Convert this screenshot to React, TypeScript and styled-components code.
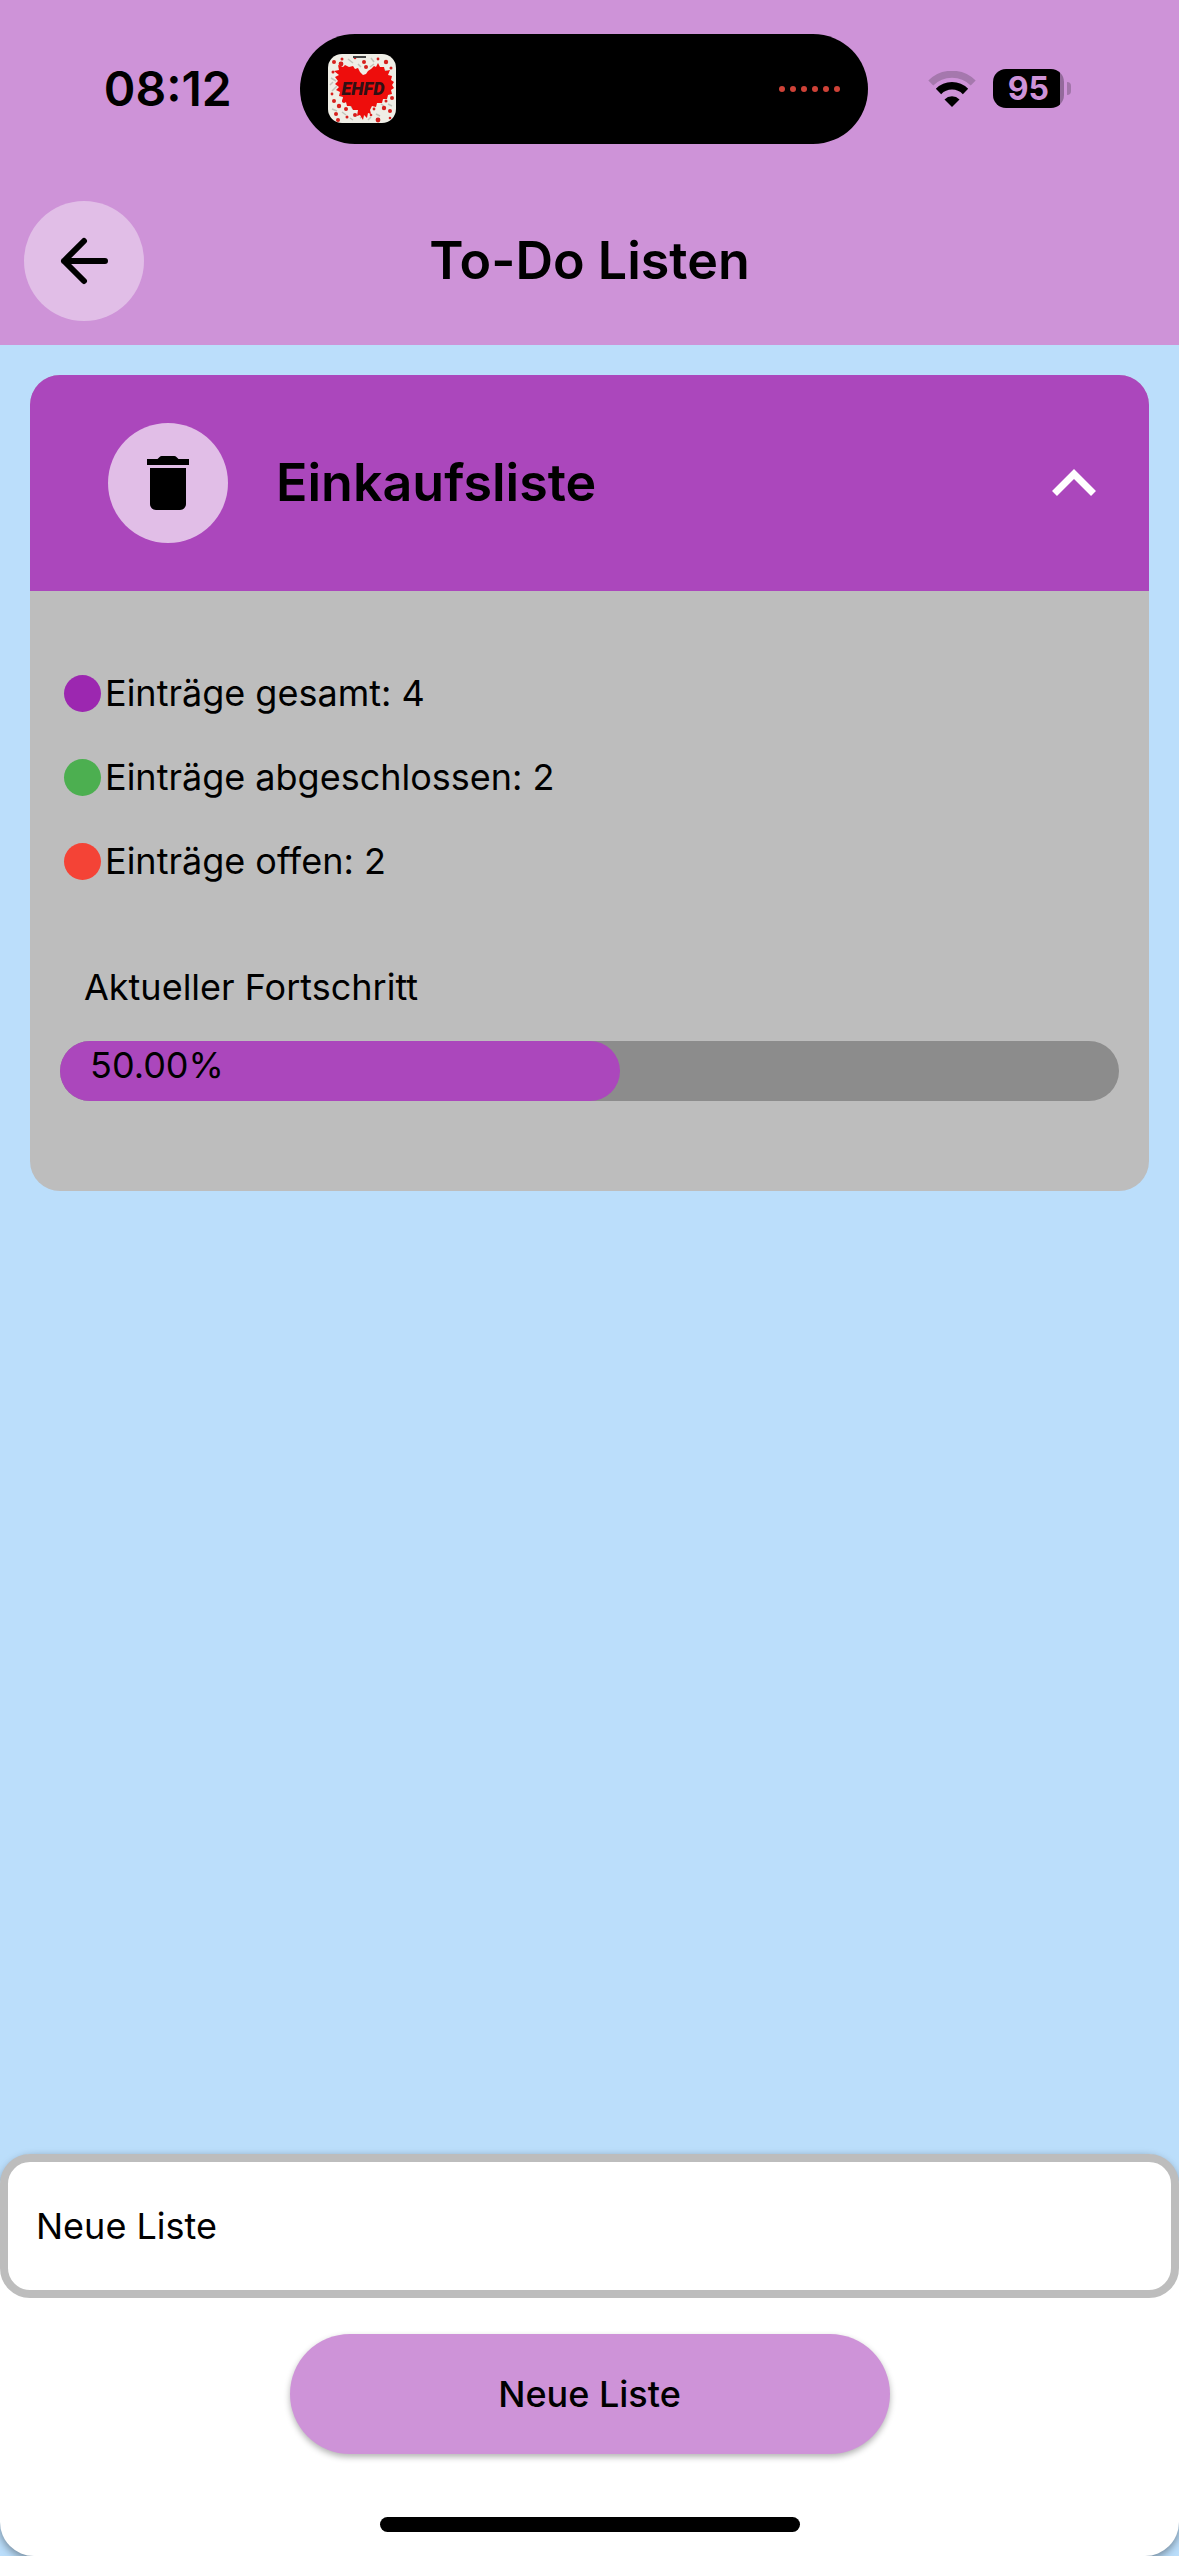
import React, { useState } from "react";
import styled, { createGlobalStyle } from "styled-components";

const colors = {
  bar: "#ce93d8",
  accent: "#ab47bc",
  soft: "#e1bee7",
  page: "#bbdefb",
  panel: "#bdbdbd",
  track: "#8c8c8c",
};

const GlobalStyle = createGlobalStyle`
  *, *::before, *::after { box-sizing: border-box; }
  body {
    margin: 0;
    background: ${colors.page};
    color: #000;
    font-family: Inter, "Liberation Sans", sans-serif;
    font-size: 36px;
    line-height: 42px;
  }
  button, input { font: inherit; color: inherit; }
`;

const Page = styled.div`
  display: flex;
  flex-direction: column;
  min-height: 100vh;
`;

const Header = styled.header`
  background: ${colors.bar};
  padding-bottom: 24px;
`;

const StatusBar = styled.div`
  display: grid;
  grid-template-columns: 1fr 568px 1fr;
  align-items: center;
  height: 177px;
  padding-right: 12px;
`;

const Clock = styled.time`
  padding-left: 36px;
  text-align: center;
  font-size: 48px;
  line-height: 60px;
  font-weight: 600;
`;

const Island = styled.div`
  display: flex;
  align-items: center;
  justify-content: space-between;
  height: 110px;
  padding: 0 28px;
  border-radius: 55px;
  background: #000;
`;

const Dots = styled.div`
  display: flex;
  gap: 5px;
`;

const RecordDot = styled.span`
  width: 6px;
  height: 6px;
  border-radius: 50%;
  background: #cf4238;
`;

const StatusIcons = styled.div`
  display: flex;
  align-items: center;
  justify-content: center;
  gap: 17px;
  padding-right: 36px;
`;

const Battery = styled.div`
  display: flex;
  align-items: center;
  gap: 3px;
`;

const BatteryBody = styled.span`
  width: 71px;
  height: 39px;
  border-radius: 13px;
  background: linear-gradient(90deg, #000 67px, #936a9b 67px);
  color: ${colors.bar};
  font-size: 32px;
  line-height: 40px;
  font-weight: 700;
  text-align: center;
`;

const BatteryTip = styled.span`
  width: 4px;
  height: 13px;
  border-radius: 0 4px 4px 0;
  background: #a275aa;
`;

const TitleBar = styled.div`
  display: grid;
  grid-template-columns: 120px 1fr 120px;
  align-items: center;
  padding: 24px 24px 0;
`;

const RoundButton = styled.button`
  display: flex;
  align-items: center;
  justify-content: center;
  width: 120px;
  height: 120px;
  padding: 0;
  border: 0;
  border-radius: 50%;
  background: ${colors.soft};
`;

const PageTitle = styled.h1`
  margin: 0;
  text-align: center;
  font-size: 52px;
  line-height: 60px;
  font-weight: 600;
`;

const Main = styled.main`
  flex: 1;
  padding: 30px;
`;

const Card = styled.article`
  overflow: hidden;
  border-radius: 30px;
  background: ${colors.panel};
`;

const CardHeader = styled.div`
  display: flex;
  align-items: center;
  padding: 48px 48px 48px 78px;
  background: ${colors.accent};
`;

const CardTitle = styled.h2`
  flex: 1;
  margin: 0 0 0 48px;
  font-size: 52px;
  line-height: 60px;
  font-weight: 600;
`;

const ToggleButton = styled.button`
  display: flex;
  padding: 0;
  border: 0;
  background: none;
`;

const CardBody = styled.div`
  padding: 60px 30px 90px;
`;

const Stats = styled.ul`
  margin: 0 0 63px;
  padding: 0 4px;
  list-style: none;
`;

const Stat = styled.li`
  display: flex;
  align-items: center;
  gap: 4px;
  height: 84px;
`;

const StatDot = styled.span<{ $color: string }>`
  width: 37px;
  height: 37px;
  border-radius: 50%;
  background: ${({ $color }) => $color};
`;

const ProgressLabel = styled.p`
  margin: 0 24px 33px;
`;

const Track = styled.div`
  height: 60px;
  border-radius: 30px;
  background: ${colors.track};
`;

const Fill = styled.div`
  height: 60px;
  padding: 3px 30px;
  border-radius: 30px;
  background: ${colors.accent};
`;

const Footer = styled.form`
  display: flex;
  flex-direction: column;
  align-items: center;
  padding-bottom: 24px;
  border-radius: 34px;
  background: #fff;
  box-shadow: 0 3px 9px rgba(0, 0, 0, 0.4);
`;

const NameInput = styled.input`
  width: 100%;
  height: 144px;
  padding: 0 28px;
  border: 8px solid ${colors.panel};
  border-radius: 30px;
  background: #fff;
  outline: none;

  &::placeholder {
    color: #000;
    opacity: 1;
  }
`;

const SubmitButton = styled.button`
  width: 600px;
  max-width: 90%;
  height: 120px;
  margin: 36px 0 63px;
  border: 0;
  border-radius: 60px;
  background: ${colors.bar};
  box-shadow: 0 3px 6px rgba(0, 0, 0, 0.3);
  font-weight: 500;
`;

const HomeIndicator = styled.div`
  width: 420px;
  height: 15px;
  border-radius: 8px;
  background: #000;
`;

const specks = [
  [6, 8, 2], [14, 5, 1.5], [13, 10, 2.4], [27, 4, 1.3], [36, 8, 2], [38, 13, 2], [50, 5, 1.4],
  [58, 8, 2.2], [63, 14, 1.5], [5, 18, 1.5], [4, 40, 1.4], [6, 47, 2], [11, 52, 2.2], [8, 60, 2],
  [18, 55, 2], [19, 63, 1.5], [27, 61, 2], [10, 66, 2], [46, 55, 1.4], [56, 54, 2.2], [62, 57, 2],
  [64, 44, 2], [58, 47, 1.5], [50, 66, 2.4], [43, 61, 1.3], [62, 64, 1.3], [16, 47, 2],
];

const AppLogo = () => (
  <svg width="68" height="69" viewBox="0 0 68 69" role="img" aria-label="EHFD">
    <rect width="68" height="69" rx="14" fill="#efeee6" />
    <path
      d="M3 24l5 3M9 32l-5 5M20 5l5 4M43 4l3 4M54 15l6 3M4 55l5 2M14 58l4 3M22 51l3 4M32 64l4-2M40 66l3-3M48 60l4 2M53 50l3 2M60 50l4 2M30 10l3 3M42 13l4-3M22 64l3 2M2 31l3-3"
      stroke="#c4c4bb"
      strokeWidth="1.5"
    />
    {specks.map(([x, y, r]) => (
      <circle key={`${x}-${y}`} cx={x} cy={y} r={r} fill="#d6201e" />
    ))}
    <path
      d="M6 17l5-1-1-5 5 2 2-2 4 2 4-1 2 3 3-1 2 4 3 3 3-1 2-3 3-2 3-3 2 1 2-4 2 4 4 0 1 4 5-1-2 5 4 1-1 4 3 2-2 3 2 3-3 2 1 4-4 1-1 4-4 0-1 4-5 0-1 4-4-1-2 4 1 4-3-1-1 5-3-3-1 5-3-5-3 1 1-6-5 0-2-4-4 0-1-4-4 0 1-5-4-1 1-4-4-2 3-3-4-3 3-3-3-4 4-2z"
      fill="#ee0d0c"
    />
    <path d="M25 3h13" stroke="#444" strokeWidth="2" />
    <text
      x="35"
      y="41"
      textAnchor="middle"
      fontFamily="Roboto, sans-serif"
      fontSize="18"
      fontWeight="900"
      fontStyle="italic"
      fill="#311014"
    >
      EHFD
    </text>
  </svg>
);

const WifiIcon = () => (
  <svg width="48" height="36" viewBox="0 0 48 36" fill="none" aria-hidden="true">
    <path d="M2.800 12A30 30 0 0 1 45.200 12" stroke="#a578ad" strokeWidth="7" />
    <path d="M10.500 20.500A19 19 0 0 1 37.500 20.500" stroke="#000" strokeWidth="7.500" />
    <path d="M24 36l-7.500-7.600a10.700 10.700 0 0 1 15 0z" fill="#000" />
  </svg>
);

const BackIcon = () => (
  <svg width="48" height="48" viewBox="0 0 48 48" fill="none" aria-hidden="true">
    <path
      d="M24 4L4 24l20 20M4 24h41"
      stroke="#000"
      strokeWidth="6"
      strokeLinecap="round"
      strokeLinejoin="round"
    />
  </svg>
);

const TrashIcon = () => (
  <svg width="72" height="72" viewBox="0 0 24 24" aria-hidden="true">
    <path d="M6 19c0 1.100.9 2 2 2h8c1.100 0 2-.9 2-2V7H6v12zM19 4h-3.500l-.7-.7a1 1 0 0 0-.7-.3H9.900a1 1 0 0 0-.7.300L8.500 4H5v2h14V4z" />
  </svg>
);

const ChevronIcon = ({ open }: { open: boolean }) => (
  <svg width="54" height="54" viewBox="0 0 54 54" fill="none" aria-hidden="true">
    <path
      d={open ? "M7.500 37.500L27 18l19.500 19.500" : "M7.500 18L27 37.500 46.500 18"}
      stroke="#fff"
      strokeWidth="7"
    />
  </svg>
);

const stats = [
  { label: "Einträge gesamt", count: 4, color: "#9c27b0" },
  { label: "Einträge abgeschlossen", count: 2, color: "#4caf50" },
  { label: "Einträge offen", count: 2, color: "#f44336" },
];

export default function App() {
  const [open, setOpen] = useState(true);
  const percent = (stats[1].count / stats[0].count) * 100;

  return (
    <Page>
      <GlobalStyle />
      <Header>
        <StatusBar>
          <Clock>08:12</Clock>
          <Island>
            <AppLogo />
            <Dots>
              {[0, 1, 2, 3, 4, 5].map((dot) => (
                <RecordDot key={dot} />
              ))}
            </Dots>
          </Island>
          <StatusIcons>
            <WifiIcon />
            <Battery>
              <BatteryBody>95</BatteryBody>
              <BatteryTip />
            </Battery>
          </StatusIcons>
        </StatusBar>
        <TitleBar>
          <RoundButton type="button" aria-label="Zurück">
            <BackIcon />
          </RoundButton>
          <PageTitle>To-Do Listen</PageTitle>
        </TitleBar>
      </Header>
      <Main>
        <Card>
          <CardHeader>
            <RoundButton type="button" aria-label="Liste löschen">
              <TrashIcon />
            </RoundButton>
            <CardTitle>Einkaufsliste</CardTitle>
            <ToggleButton
              type="button"
              aria-label="Details anzeigen"
              aria-expanded={open}
              onClick={() => setOpen(!open)}
            >
              <ChevronIcon open={open} />
            </ToggleButton>
          </CardHeader>
          {open && (
            <CardBody>
              <Stats>
                {stats.map(({ label, count, color }) => (
                  <Stat key={label}>
                    <StatDot $color={color} />
                    <span>{`${label}: ${count}`}</span>
                  </Stat>
                ))}
              </Stats>
              <ProgressLabel id="progress-label">Aktueller Fortschritt</ProgressLabel>
              <Track
                role="progressbar"
                aria-labelledby="progress-label"
                aria-valuenow={percent}
                aria-valuemin={0}
                aria-valuemax={100}
              >
                <Fill style={{ width: `calc(${percent}% + 30px)` }}>{`${percent.toFixed(2)}%`}</Fill>
              </Track>
            </CardBody>
          )}
        </Card>
      </Main>
      <Footer onSubmit={(event) => event.preventDefault()}>
        <NameInput type="text" aria-label="Neue Liste" placeholder="Neue Liste" />
        <SubmitButton type="submit">Neue Liste</SubmitButton>
        <HomeIndicator />
      </Footer>
    </Page>
  );
}
